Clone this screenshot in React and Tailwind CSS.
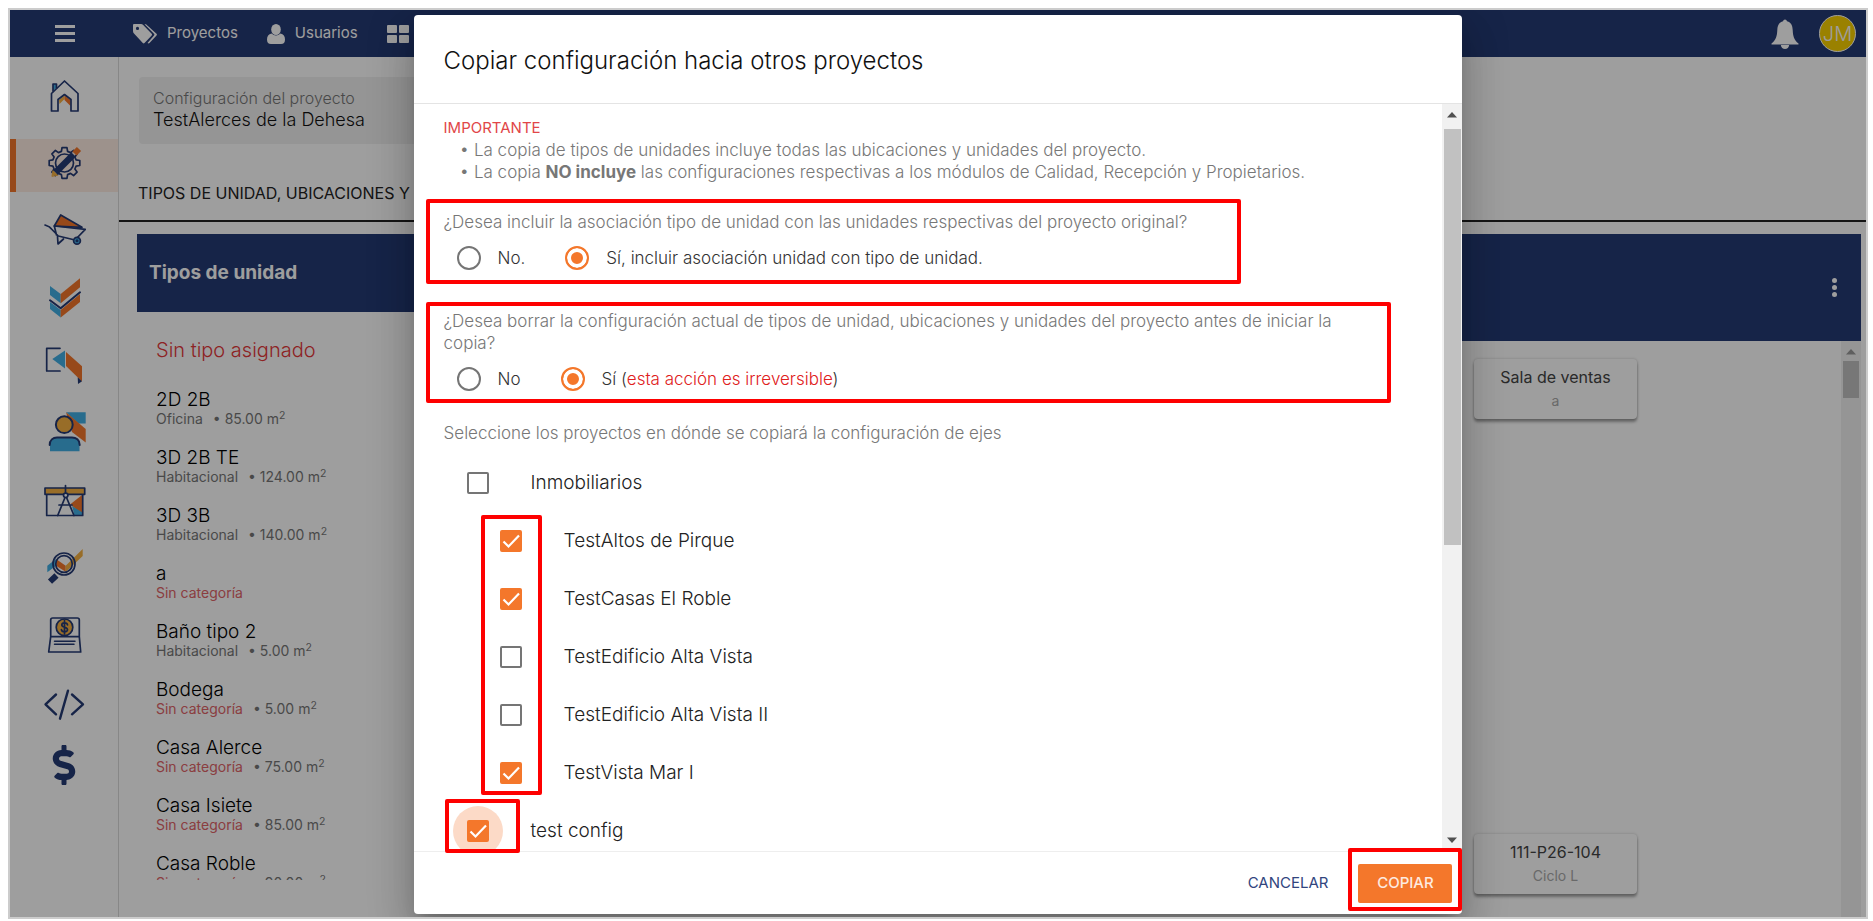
import React from 'react';
import { FaDollarSign } from 'react-icons/fa';

const unitTypes = [
  { name: '2D 2B', category: 'Oficina', area: '85.00' },
  { name: '3D 2B TE', category: 'Habitacional', area: '124.00' },
  { name: '3D 3B', category: 'Habitacional', area: '140.00' },
  { name: 'a' },
  { name: 'Baño tipo 2', category: 'Habitacional', area: '5.00' },
  { name: 'Bodega', area: '5.00' },
  { name: 'Casa Alerce', area: '75.00' },
  { name: 'Casa Isiete', area: '85.00' },
  { name: 'Casa Roble', area: '90.00' },
];

const projects = [
  { id: 'inmobiliarios', name: 'Inmobiliarios', checked: false },
  { id: 'pirque', name: 'TestAltos de Pirque', checked: true, child: true },
  { id: 'roble', name: 'TestCasas El Roble', checked: true, child: true },
  { id: 'vista', name: 'TestEdificio Alta Vista', checked: false, child: true },
  { id: 'vista2', name: 'TestEdificio Alta Vista II', checked: false, child: true },
  { id: 'mar', name: 'TestVista Mar I', checked: true, child: true },
  { id: 'config', name: 'test config', checked: true, focused: true },
];

const NAVY = '#253a74';
const ORANGE = '#f4772b';
const BLUE = '#42aee4';
const YELLOW = '#f5b041';

// Outline of the eight-tooth gear
const gearPoints = Array.from({ length: 8 }, (_, i) => {
  const base = (i * Math.PI) / 4;
  return [[-0.26, 12], [-0.16, 15.5], [0.16, 15.5], [0.26, 12]]
    .map(([a, r]) => `${22.5 + r * Math.sin(base + a)},${22 - r * Math.cos(base + a)}`)
    .join(' ');
}).join(' ');

const Icon = ({ children }) => (
  <svg className="size-11" viewBox="0 0 44 44" fill="none" stroke={NAVY} strokeWidth="1.7" strokeLinejoin="round" strokeLinecap="round" aria-hidden="true">
    {children}
  </svg>
);

const HomeIcon = () => (
  <Icon>
    <path d="M11 17V10h3.500v4" fill={BLUE} />
    <path d="M17 26l5.500-4.500v3.500L17.500 30z" fill={YELLOW} stroke="none" />
    <path d="M22.500 21.500L28.500 26v6l-6-6z" fill={ORANGE} stroke="none" />
    <path d="M9.500 37V19.500L22.500 7L36 19.500V37H29V25.500L22.500 20.500L16 25.500V37Z" />
  </Icon>
);

const GearIcon = () => (
  <Icon>
    <polygon points={gearPoints} />
    <circle cx="22.500" cy="22" r="9" />
    <path d="M10 35l1-5.500L15.500 34z" fill={YELLOW} stroke={YELLOW} strokeWidth="1" />
    <path d="M13.500 31.500L31.500 13.500" stroke={NAVY} strokeWidth="6.500" strokeLinecap="butt" />
    <path d="M32.500 12.500L37 8" stroke={ORANGE} strokeWidth="6" strokeLinecap="butt" />
  </Icon>
);

const BarrowIcon = () => (
  <Icon>
    <path d="M18.700 7L40 19.300L12.300 18Z" fill={ORANGE} />
    <path d="M3 17C6 18 8 18.500 9.500 21L16.300 28L33 32L43.300 21.300L12.300 18L14.500 27" />
    <path d="M15.500 28.500L16 36L21.500 31" />
    <circle cx="35" cy="32.700" r="3.400" fill={BLUE} />
    <circle cx="35" cy="32.700" r="0.700" fill={NAVY} />
  </Icon>
);

const ChevronsIcon = () => (
  <Icon>
    <g stroke="none">
      <path d="M8 10L18.700 18V27.300L8 19Z" fill={BLUE} />
      <path d="M18.700 18L38 2.300V11.300L18.700 27.300Z" fill={ORANGE} />
      <path d="M8 26L18.700 34V41.500L8 33Z" fill={BLUE} />
      <path d="M18.700 34L38 18V26L18.700 41.500Z" fill={ORANGE} />
    </g>
    <path d="M8 24.300L18.700 32.300L38 16.300" strokeWidth="2" />
  </Icon>
);

const HandoverIcon = () => (
  <Icon>
    <path d="M18 5.300H4.700V28H18" />
    <path d="M10.300 16L23 7.500V25.500Z" fill={BLUE} stroke="none" />
    <path d="M24 9L40 23.300V38.500L24 23Z" fill={ORANGE} stroke="none" />
    <path d="M35.700 34.300L40 38.300L36 41Z" fill={NAVY} stroke="none" />
  </Icon>
);

const PersonIcon = () => (
  <Icon>
    <path d="M24 2.300H43.700V13.500H36.500Z" fill={BLUE} stroke="none" />
    <path d="M24 2.300L43.700 19V32.500L30 22Z" fill={ORANGE} stroke="none" />
    <circle cx="22.300" cy="14.700" r="8.400" fill={YELLOW} strokeWidth="2" />
    <path d="M8 41.300V34C8 30 11 27.500 15 27.500H30C34 27.500 37.500 30 37.500 34V41.300Z" fill={BLUE} stroke="none" />
    <path d="M7.700 35C7.700 30 11 27.500 15 27.500H30C34 27.500 37.700 30 37.700 35" strokeWidth="2" />
  </Icon>
);

const DraftIcon = () => (
  <Icon>
    <path d="M28.700 26L40 17V37L30 27.500" fill={ORANGE} stroke="none" />
    <path d="M30 28L34 30.500L40.500 34.500V37.500H32.500Z" fill={BLUE} stroke="none" />
    <rect x="4.700" y="16" width="36" height="21.500" />
    <rect x="3" y="10" width="39.700" height="6.300" fill={YELLOW} />
    <path d="M23.500 7.500V15M23 19.500L15.700 37.500M24.500 19.500L32 37.500M17 27H30" />
    <circle cx="23.700" cy="17.300" r="2.200" fill="#fff" />
  </Icon>
);

const SearchIcon = () => (
  <Icon>
    <g stroke="none">
      <path d="M5.300 20.700L14 14V20.700L5.300 27.300Z" fill={BLUE} />
      <path d="M14 14L23.700 20.700V26.700L14 20.700Z" fill={ORANGE} />
      <path d="M23.700 20.700L40.700 4V11L23.700 27Z" fill={YELLOW} />
    </g>
    <circle cx="22" cy="19" r="11" />
    <circle cx="22" cy="19" r="8.300" />
    <path d="M14.500 30.500L8 36.700" strokeWidth="6" strokeLinecap="butt" />
  </Icon>
);

const LaptopIcon = () => (
  <Icon>
    <path d="M8.700 23.700V7Q8.700 5 10.700 5H35.300Q37.300 5 37.300 7V23.700L38.700 39H6.700L8.700 23.700H37.300" />
    <circle cx="22.500" cy="14.300" r="8.300" fill={YELLOW} />
    <path d="M25.500 11.800C25 9 19.800 9.200 19.800 12C19.800 15 25.500 13.500 25.500 16.700C25.500 19.500 19.800 19.500 19.400 16.600M22.500 7.500V21" />
    <path d="M12.500 28.300H33M12.500 31.300H32" strokeWidth="1.500" />
  </Icon>
);

const CodeIcon = () => (
  <Icon>
    <path d="M14 12.500L3.500 22.300L14 32.300M30 12.500L41 22.300L30 32.300M26 8.700L18 36.700" strokeWidth="2.400" />
  </Icon>
);

const sideLinks = [
  { label: 'Inicio', icon: <HomeIcon /> },
  { label: 'Configuración', icon: <GearIcon />, active: true },
  { label: 'Obra', icon: <BarrowIcon /> },
  { label: 'Calidad', icon: <ChevronsIcon /> },
  { label: 'Recepción', icon: <HandoverIcon /> },
  { label: 'Propietarios', icon: <PersonIcon /> },
  { label: 'Planos', icon: <DraftIcon /> },
  { label: 'Análisis', icon: <SearchIcon /> },
  { label: 'Ventas', icon: <LaptopIcon /> },
];

const TopBar = () => (
  <header className="flex h-[47px] shrink-0 items-center bg-[#253a74] text-[15px] text-white">
    <button aria-label="Menú" className="flex w-[109px] justify-center">
      <span className="flex w-5 flex-col gap-1">
        <span className="h-[3px] bg-white" />
        <span className="h-[3px] bg-white" />
        <span className="h-[3px] bg-white" />
      </span>
    </button>
    <nav className="flex items-center gap-[29px] pl-3.5">
      <a href="#proyectos" className="flex items-center gap-2.5">
        <svg className="h-5 w-6" viewBox="0 0 24 20" fill="currentColor" aria-hidden="true">
          <path fillRule="evenodd" d="M1 0H8Q9.300 0 10.200 1L18.700 9.700Q19.500 10.500 18.700 11.400L11.500 19Q10.700 19.800 9.800 19L1 9.500Q0 8.500 0 7V1Q0 0 1 0ZM4.500 2.800A1.600 1.600 0 1 0 4.500 6A1.600 1.600 0 1 0 4.500 2.800Z" />
          <path d="M11.500 0.300H13L23.500 9.800Q24.300 10.500 23.500 11.400L16.500 19Q15.700 19.800 14.500 19L21 11.500Q21.800 10.500 21 9.700Z" />
        </svg>
        Proyectos
      </a>
      <a href="#usuarios" className="flex items-center gap-2.5">
        <svg className="h-5 w-[18px]" viewBox="0 0 18 20" fill="currentColor" aria-hidden="true">
          <ellipse cx="9" cy="5.500" rx="4.800" ry="5.500" />
          <path d="M4.500 9.500Q9 13.500 13.500 9.500Q18 10.500 18 15.500Q18 20 14 20H4Q0 20 0 15.500Q0 10.500 4.500 9.500Z" />
        </svg>
        Usuarios
      </a>
      <a href="#modulos" aria-label="Módulos">
        <svg className="h-[18px] w-[22px]" viewBox="0 0 22 18" fill="currentColor" aria-hidden="true">
          <rect width="10" height="8" rx="1" />
          <rect x="12" width="10" height="8" rx="1" />
          <rect y="10" width="10" height="8" rx="1" />
          <rect x="12" y="10" width="10" height="8" rx="1" />
        </svg>
      </a>
    </nav>
    <button aria-label="Notificaciones" className="ml-auto">
      <svg className="h-[30px] w-7" viewBox="0 0 28 30" fill="currentColor" aria-hidden="true">
        <path d="M14 0.500Q15.700 0.500 16 2.300C20.500 3.500 21.500 7 21.700 11C22 17 23 21 27.500 24.500V25.500H0.500V24.500C5 21 6 17 6.300 11C6.500 7 7.500 3.500 12 2.300Q12.300 0.500 14 0.500Z" />
        <path d="M9.800 26H18.200Q17.500 30 14 30T9.800 26Z" />
      </svg>
    </button>
    <button className="mr-2.5 ml-5 size-[37px] rounded-full border border-white bg-[#f9d000] text-xl font-light">JM</button>
  </header>
);

const SideBar = () => (
  <aside className="w-[109px] shrink-0 border-r border-[#dadada]">
    <nav className="mt-[15px] flex h-[592px] flex-col justify-between">
      {sideLinks.map((link) => (
        <a
          key={link.label}
          href="#modulo"
          aria-label={link.label}
          className={
            link.active
              ? 'flex h-[53px] items-center justify-center border-l-6 border-[#f4772b] bg-[#fdece3] pr-1.5 pb-1.5'
              : 'flex h-[53px] items-center justify-center pb-1.5'
          }
        >
          {link.icon}
        </a>
      ))}
    </nav>
    <a href="#api" aria-label="API" className="mt-[13px] flex h-[53px] items-center justify-center">
      <CodeIcon />
    </a>
    <a href="#costos" aria-label="Costos" className="mt-2 flex h-[53px] items-center justify-center">
      <FaDollarSign className="size-10 text-[#253a74]" />
    </a>
  </aside>
);

const UnitList = () => (
  <section className="flex w-[400px] shrink-0 flex-col">
    <h2 className="flex h-[78px] shrink-0 items-center bg-[#253a74] px-3 text-[19px] font-bold text-white">Tipos de unidad</h2>
    <h3 className="mt-[25px] mb-4 px-[19px] text-xl leading-[26px] font-light text-[#e5383a]">Sin tipo asignado</h3>
    <ul className="min-h-0 flex-1 overflow-hidden px-[19px]">
      {unitTypes.map((unit) => (
        <li key={unit.name} className="h-[58px] pt-2.5">
          <div className="text-[19px] leading-[22px] font-light">{unit.name}</div>
          <div className="flex gap-2.5 text-sm leading-4 text-[#777]">
            {unit.category ? <span>{unit.category}</span> : <span className="text-[#e06468]">Sin categoría</span>}
            {unit.area && (
              <span>
                • {unit.area} m<sup>2</sup>
              </span>
            )}
          </div>
        </li>
      ))}
    </ul>
  </section>
);

const UnitCard = ({ title, detail }) => (
  <div className="flex h-[60px] w-[163px] flex-col items-center justify-center rounded shadow-[0_3px_3px_rgba(0,0,0,0.35),0_0_3px_rgba(0,0,0,0.2)]">
    <div className="text-base leading-6 text-[#444]">{title}</div>
    <div className="text-sm leading-6 text-[#aaa]">{detail}</div>
  </div>
);

const LocationPanel = () => (
  <section className="flex min-w-0 flex-1 flex-col">
    <div className="flex h-[107px] shrink-0 items-center justify-end bg-[#253a74] pr-6">
      <button aria-label="Opciones" className="flex flex-col gap-0.5">
        <span className="size-[5px] rounded-full bg-white" />
        <span className="size-[5px] rounded-full bg-white" />
        <span className="size-[5px] rounded-full bg-white" />
      </button>
    </div>
    <div className="flex min-h-0 flex-1 justify-end">
      <div className="mr-[204px] flex flex-col justify-between pt-[18px] pb-[23px]">
        <UnitCard title="Sala de ventas" detail="a" />
        <UnitCard title="111-P26-104" detail="Ciclo L" />
      </div>
      <div className="flex w-5 flex-col items-center bg-[#f1f1f1] pt-2">
        <svg className="h-1.5 w-2.5" viewBox="0 0 10 6" aria-hidden="true">
          <path d="M0 5.500L5 0L10 5.500Z" fill="#999" />
        </svg>
        <div className="mt-1.5 h-[37px] w-4 bg-[#c1c1c1]" />
      </div>
    </div>
  </section>
);

const Highlight = ({ className }) => (
  <div className={`pointer-events-none absolute rounded-xs border-4 border-[#fe0000] ${className}`} />
);

const Radio = ({ name, defaultChecked, children }) => (
  <label className="flex items-center gap-[17px] text-[#333]">
    <input
      type="radio"
      name={name}
      defaultChecked={defaultChecked}
      className="size-6 appearance-none rounded-full border-2 border-[#757575] checked:border-[#f4772b] checked:bg-[#f4772b] checked:shadow-[inset_0_0_0_4px_white]"
    />
    <span>{children}</span>
  </label>
);

const ProjectRow = ({ project }) => (
  <label className={project.child ? 'flex h-[58px] items-center gap-[42px] pl-14' : 'flex h-[58px] items-center gap-[42px] pl-[23px]'}>
    <span className="relative flex size-[22px] items-center justify-center">
      {project.focused && <span className="absolute -inset-3.5 rounded-full bg-[#fcdac7]" />}
      <input
        type="checkbox"
        defaultChecked={project.checked}
        className="peer relative size-[22px] appearance-none rounded-xs border-2 border-[#757575] checked:border-[#f4772b] checked:bg-[#f4772b]"
      />
      <svg className="absolute hidden size-[22px] peer-checked:block" viewBox="0 0 22 22" fill="none" stroke="#fff" strokeWidth="2.200" aria-hidden="true">
        <path d="M3.500 11.500L8.500 16.500L19 5.500" />
      </svg>
    </span>
    <span className="text-[19px] text-[#222]">{project.name}</span>
  </label>
);

const CopyDialog = () => (
  <div
    role="dialog"
    aria-labelledby="copy-title"
    className="flex h-full w-[56vw] flex-col rounded bg-white shadow-[0_11px_15px_-7px_rgba(0,0,0,0.2),0_24px_38px_3px_rgba(0,0,0,0.14),0_9px_46px_8px_rgba(0,0,0,0.12)]"
  >
    <h1 id="copy-title" className="flex h-[89px] shrink-0 items-center border-b border-[#e4e4e4] px-[30px] pt-1 text-2xl font-light text-[#111]">
      Copiar configuración hacia otros proyectos
    </h1>
    <div className="relative min-h-0 flex-1">
      <div className="flex h-full">
        <form className="min-w-0 flex-1 overflow-hidden px-[30px] pt-[13px] text-[17px] leading-[22px] font-light text-[#777]">
          <p className="text-[15px] font-normal text-[#e14648]">IMPORTANTE</p>
          <ul className="pl-4">
            <li>• La copia de tipos de unidades incluye todas las ubicaciones y unidades del proyecto.</li>
            <li>• La copia <strong className="font-bold">NO incluye</strong> las configuraciones respectivas a los módulos de Calidad, Recepción y Propietarios.</li>
          </ul>
          <div role="radiogroup" aria-labelledby="association-label" className="relative mt-7 w-fit">
            <p id="association-label">¿Desea incluir la asociación tipo de unidad con las unidades respectivas del proyecto original?</p>
            <div className="flex gap-10 pt-[13px] pl-[13px]">
              <Radio name="association">No.</Radio>
              <Radio name="association" defaultChecked>Sí, incluir asociación unidad con tipo de unidad.</Radio>
            </div>
            <Highlight className="-top-3 -right-[54px] -bottom-3.5 -left-[18px]" />
          </div>
          <div role="radiogroup" aria-labelledby="erase-label" className="relative mt-10 max-w-[933px]">
            <p id="erase-label">
              ¿Desea borrar la configuración actual de tipos de unidad, ubicaciones y unidades del proyecto antes de iniciar la copia?
            </p>
            <div className="flex gap-10 pt-[13px] pl-[13px]">
              <Radio name="erase">No</Radio>
              <Radio name="erase" defaultChecked>
                Sí (<span className="text-[#e02020]">esta acción es irreversible</span>)
              </Radio>
            </div>
            <Highlight className="-top-2 -right-3.5 -bottom-3 -left-[18px]" />
          </div>
          <p className="mt-[31px] mb-2.5">Seleccione los proyectos en dónde se copiará la configuración de ejes</p>
          {projects.map((project) => (
            <ProjectRow key={project.id} project={project} />
          ))}
        </form>
        <div className="flex w-5 flex-col items-center bg-[#f1f1f1] py-2">
          <svg className="h-1.5 w-2.5" viewBox="0 0 10 6" aria-hidden="true">
            <path d="M0 5.500L5 0L10 5.500Z" fill="#505050" />
          </svg>
          <div className="mt-[11px] h-[416px] w-[17px] bg-[#c1c1c1]" />
          <svg className="mt-auto h-1.5 w-2.5" viewBox="0 0 10 6" aria-hidden="true">
            <path d="M0 0.500L5 6L10 0.500Z" fill="#505050" />
          </svg>
        </div>
      </div>
      <Highlight className="bottom-14 left-[67px] h-[280px] w-[61px]" />
      <Highlight className="-bottom-0.5 left-[31px] h-[54px] w-[75px]" />
    </div>
    <div className="flex h-[63px] shrink-0 items-center justify-end gap-3.5 border-t border-[#eee] pr-2.5 text-[15px]">
      <button type="button" className="h-[39px] px-4 text-[#31457e]">CANCELAR</button>
      <div className="relative">
        <button type="button" className="h-[39px] w-[94px] rounded-xs bg-[#f4772b] font-medium text-[#fdebe0]">COPIAR</button>
        <Highlight className="-top-4 -right-2.5 -bottom-2 -left-2.5" />
      </div>
    </div>
  </div>
);

export default function App() {
  return (
    <div className="h-screen bg-white pt-2 pr-[5px] pb-0.5 pl-2 font-['Inter',sans-serif]">
      <div className="relative flex h-full flex-col overflow-hidden border-2 border-[#ccc] bg-white">
        <TopBar />
        <div className="flex min-h-0 flex-1">
          <SideBar />
          <main className="flex min-w-0 flex-1 flex-col">
            <div className="mt-5 ml-5 flex h-[67px] w-[400px] shrink-0 flex-col justify-center rounded bg-[#f1f1f1] px-3.5 pb-1">
              <div className="text-base leading-[22px] font-light text-[#777]">Configuración del proyecto</div>
              <div className="text-lg leading-[22px] font-light text-[#111]">TestAlerces de la Dehesa</div>
            </div>
            <div className="mt-[19px] h-[59px] shrink-0 border-b-2 border-[#222] px-[19px]">
              <button className="mt-4.5 text-base text-[#222]">TIPOS DE UNIDAD, UBICACIONES Y EJES</button>
            </div>
            <div className="flex min-h-0 flex-1 pt-3 pr-[5px] pl-[18px]">
              <div className="flex min-h-0 pb-[37px]">
                <UnitList />
              </div>
              <LocationPanel />
            </div>
          </main>
        </div>
        <div className="absolute inset-0 flex justify-center bg-black/38 pt-[5px] pb-[3px]">
          <CopyDialog />
        </div>
      </div>
    </div>
  );
}
